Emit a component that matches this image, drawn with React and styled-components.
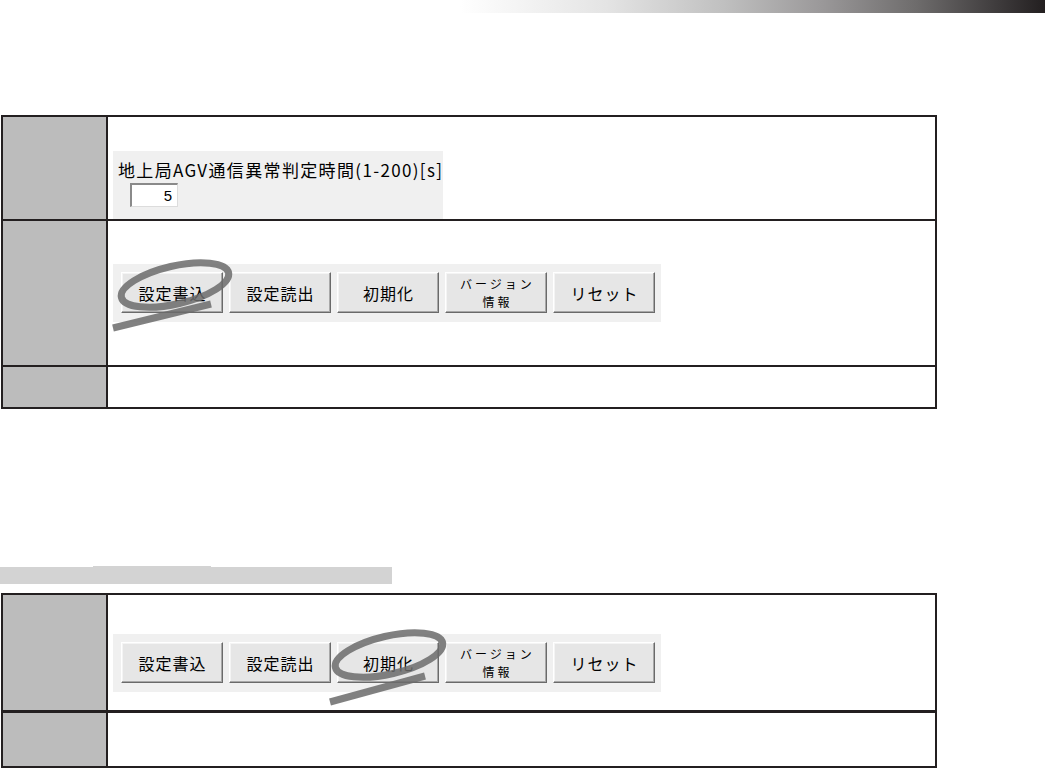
import React from 'react';
import styled, { createGlobalStyle } from 'styled-components';

const GlobalStyle = createGlobalStyle`
    html, body {
        margin: 0;
        padding: 0;
        background: #ffffff;
    }
    body {
        font-family: "Noto Sans CJK JP", "Noto Sans", sans-serif;
        color: #000;
    }
`;

const Page = styled.div`
    width: 1050px;
    height: 768px;
    overflow: hidden;
    display: flex;
    flex-direction: column;
`;

const TopBar = styled.div`
    height: 13px;
    width: 585px;
    margin-left: 460px;
    background: linear-gradient(to right, #ffffff 0%, #e4e4e4 25%, #c0c0c0 45%, #9a9899 62%, #6e6c6c 78%, #3e3b3c 92%, #231f20 100%);
`;

const Table = styled.div`
    width: 932px;
    margin-left: 1px;
    margin-top: ${props => props.top}px;
    border: 2px solid #231f20;
    display: flex;
    flex-direction: column;
`;

const Row = styled.div`
    display: grid;
    grid-template-columns: 105px 1fr;
    height: ${props => props.h}px;
    border-top: ${props => props.sep ? `${props.sep}px solid #231f20` : 'none'};
`;

const HeadCell = styled.div`
    background: #bcbcbc;
    border-right: 2px solid #231f20;
`;

const Cell = styled.div`
    padding-left: 5px;
    padding-top: ${props => props.pad || 0}px;
    display: flex;
    flex-direction: column;
    align-items: flex-start;
`;

const SettingPanel = styled.div`
    width: 330px;
    flex: 1;
    background: #f0f0f0;
    display: flex;
    flex-direction: column;
    padding: 8px 0 0 5px;
    box-sizing: border-box;
`;

const Label = styled.div`
    font-size: 17px;
    line-height: 21px;
    letter-spacing: 1.35px;
    white-space: nowrap;
`;

const NumberBox = styled.div`
    margin: 3px 0 0 12px;
    width: 48px;
    height: 24px;
    box-sizing: border-box;
    background: #fff;
    border-top: 2px solid #8a8a8a;
    border-left: 2px solid #8a8a8a;
    border-right: 1px solid #dcdcdc;
    border-bottom: 1px solid #dcdcdc;
    font-family: "Liberation Sans", sans-serif;
    font-size: 15px;
    line-height: 21px;
    text-align: right;
    padding-right: 5px;
`;

const ButtonPanel = styled.div`
    position: relative;
    width: 548px;
    height: 58px;
    box-sizing: border-box;
    background: #f0f0f0;
    display: flex;
    align-items: flex-start;
    gap: 6px;
    padding: 8px 0 0 8px;
`;

const Button = styled.div`
    width: 102px;
    height: 41px;
    box-sizing: border-box;
    background: #e6e6e6;
    border-top: 1px solid #ffffff;
    border-left: 1px solid #ffffff;
    border-right: 1px solid #6a6a6a;
    border-bottom: 1px solid #6a6a6a;
    box-shadow: inset -1px -1px 0 #a8a8a8, inset 1px 1px 0 #f4f4f4;
    display: flex;
    flex-direction: column;
    align-items: center;
    justify-content: center;
    font-size: ${props => props.small ? 12 : 16}px;
    line-height: ${props => props.small ? 18 : 20}px;
    letter-spacing: ${props => props.small ? 3 : 1}px;
    padding-left: ${props => props.small ? 3 : 1}px;
`;

const Mark = styled.svg`
    position: absolute;
    left: 0;
    top: 0;
    overflow: visible;
    pointer-events: none;
`;

const SectionBar = styled.div`
    position: relative;
    width: 392px;
    height: 17px;
    margin-top: 158px;
    background: #d3d3d3;

    &::before {
        content: '';
        position: absolute;
        left: 93px;
        top: -1px;
        width: 118px;
        height: 1px;
        background: #d3d3d3;
    }
`;

const Circle = ({ cx, tailFrom, tailTo }) => (
    <Mark width="548" height="58">
        <g stroke="#6b6b6b" strokeOpacity="0.85" fill="none" strokeLinecap="butt">
            <ellipse cx={cx} cy="21" rx="55" ry="19" transform={`rotate(-13 ${cx} 21)`} strokeWidth="7" />
            <path d={`M${tailFrom[0]} ${tailFrom[1]} L${tailTo[0]} ${tailTo[1]}`} strokeWidth="7" />
        </g>
    </Mark>
);

const Buttons = ({ children }) => (
    <ButtonPanel>
        <Button>設定書込</Button>
        <Button>設定読出</Button>
        <Button>初期化</Button>
        <Button small><span>バージョン</span><span>情報</span></Button>
        <Button>リセット</Button>
        {children}
    </ButtonPanel>
);

export default function App() {
    return (
        <Page>
            <GlobalStyle />
            <TopBar />
            <Table top={102}>
                <Row h={102}>
                    <HeadCell />
                    <Cell pad={34}>
                        <SettingPanel>
                            <Label>地上局AGV通信異常判定時間(1-200)[s]</Label>
                            <NumberBox>5</NumberBox>
                        </SettingPanel>
                    </Cell>
                </Row>
                <Row h={144} sep={2}>
                    <HeadCell />
                    <Cell pad={43}>
                        <Buttons>
                            <Circle cx={62} tailFrom={[98, 40]} tailTo={[0, 64]} />
                        </Buttons>
                    </Cell>
                </Row>
                <Row h={40} sep={2}>
                    <HeadCell />
                    <Cell />
                </Row>
            </Table>
            <SectionBar />
            <Table top={9}>
                <Row h={115}>
                    <HeadCell />
                    <Cell pad={39}>
                        <Buttons>
                            <Circle cx={276} tailFrom={[312, 42]} tailTo={[217, 68]} />
                        </Buttons>
                    </Cell>
                </Row>
                <Row h={53} sep={3}>
                    <HeadCell />
                    <Cell />
                </Row>
            </Table>
        </Page>
    );
}
